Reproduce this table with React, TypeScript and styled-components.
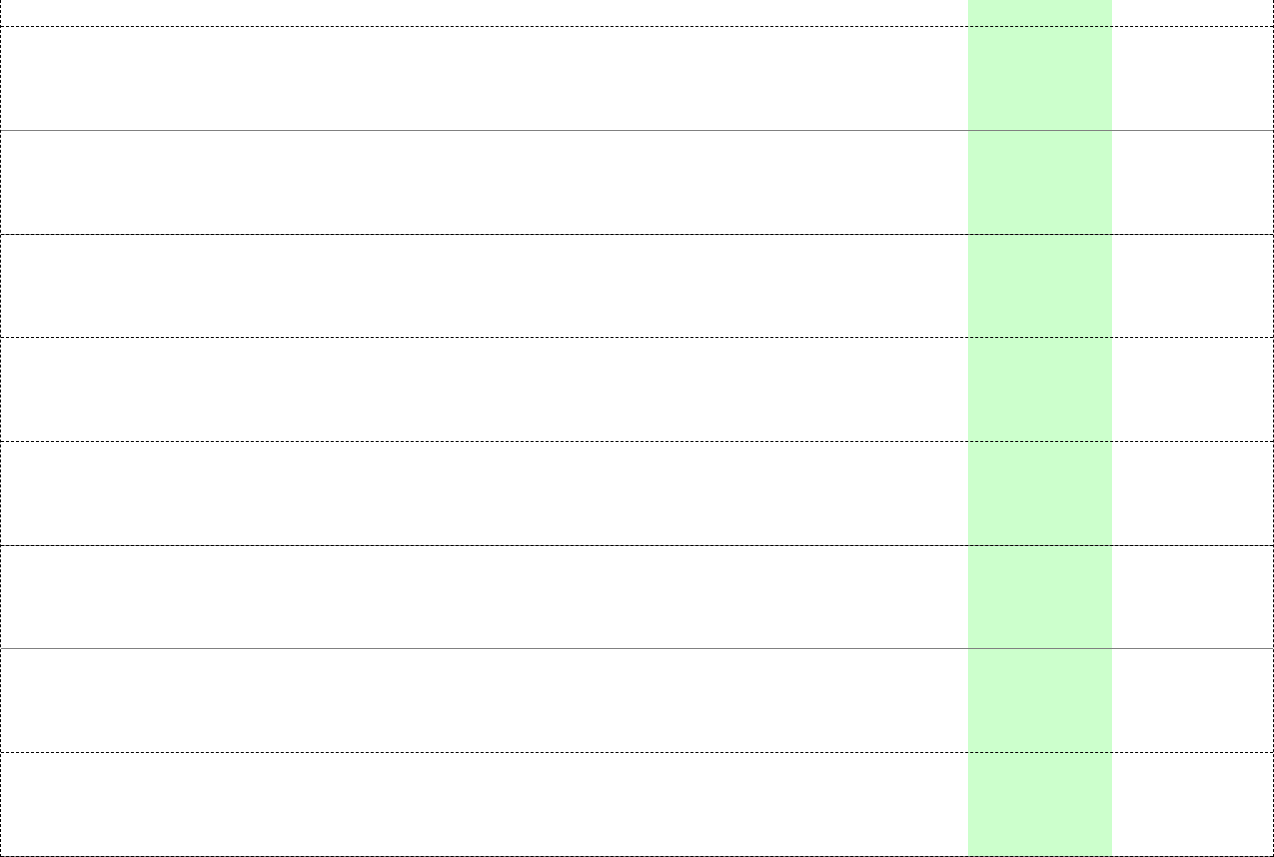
import styled, { createGlobalStyle } from "styled-components";

const GlobalStyle = createGlobalStyle`
    html, body{margin: 0; padding: 0; background: #fff;}
    body{font-family: "Liberation Sans", Arial, sans-serif;}
`;

type LineKind = "dashed" | "solid" | "both";

// highlighted day column sits at 968 → 1112
const Board = styled.div`
    box-sizing: border-box; width: 1274px; height: 857px; display: flex; flex-direction: column;
    border-left: 1px dashed #000; border-right: 1px dashed #000;
    background: linear-gradient(to right, transparent 967px, #ccffcc 967px, #ccffcc 1111px, transparent 1111px);
`;

const Slot = styled.div<{ $line: LineKind; $h: number }>`
    box-sizing: border-box; flex: 0 0 ${p => p.$h}px; width: 100%;
    border-bottom: 1px ${p => (p.$line === "solid" ? "solid #808080" : "dashed #000")};
    ${p => p.$line === "both"
        ? "background: linear-gradient(#808080, #808080) left bottom / 100% 1px no-repeat border-box;"
        : ""}
`;

const slots: { line: LineKind; h: number }[] = [
    { line: "dashed", h: 27 },
    { line: "solid", h: 104 },
    { line: "both", h: 104 },
    { line: "dashed", h: 103 },
    { line: "dashed", h: 104 },
    { line: "both", h: 104 },
    { line: "solid", h: 103 },
    { line: "dashed", h: 104 },
    { line: "both", h: 104 },
];

export default function App() {
    return (
        <>
            <GlobalStyle />
            <Board>
                {slots.map((s, i) => (
                    <Slot key={i} $line={s.line} $h={s.h} />
                ))}
            </Board>
        </>
    );
}
